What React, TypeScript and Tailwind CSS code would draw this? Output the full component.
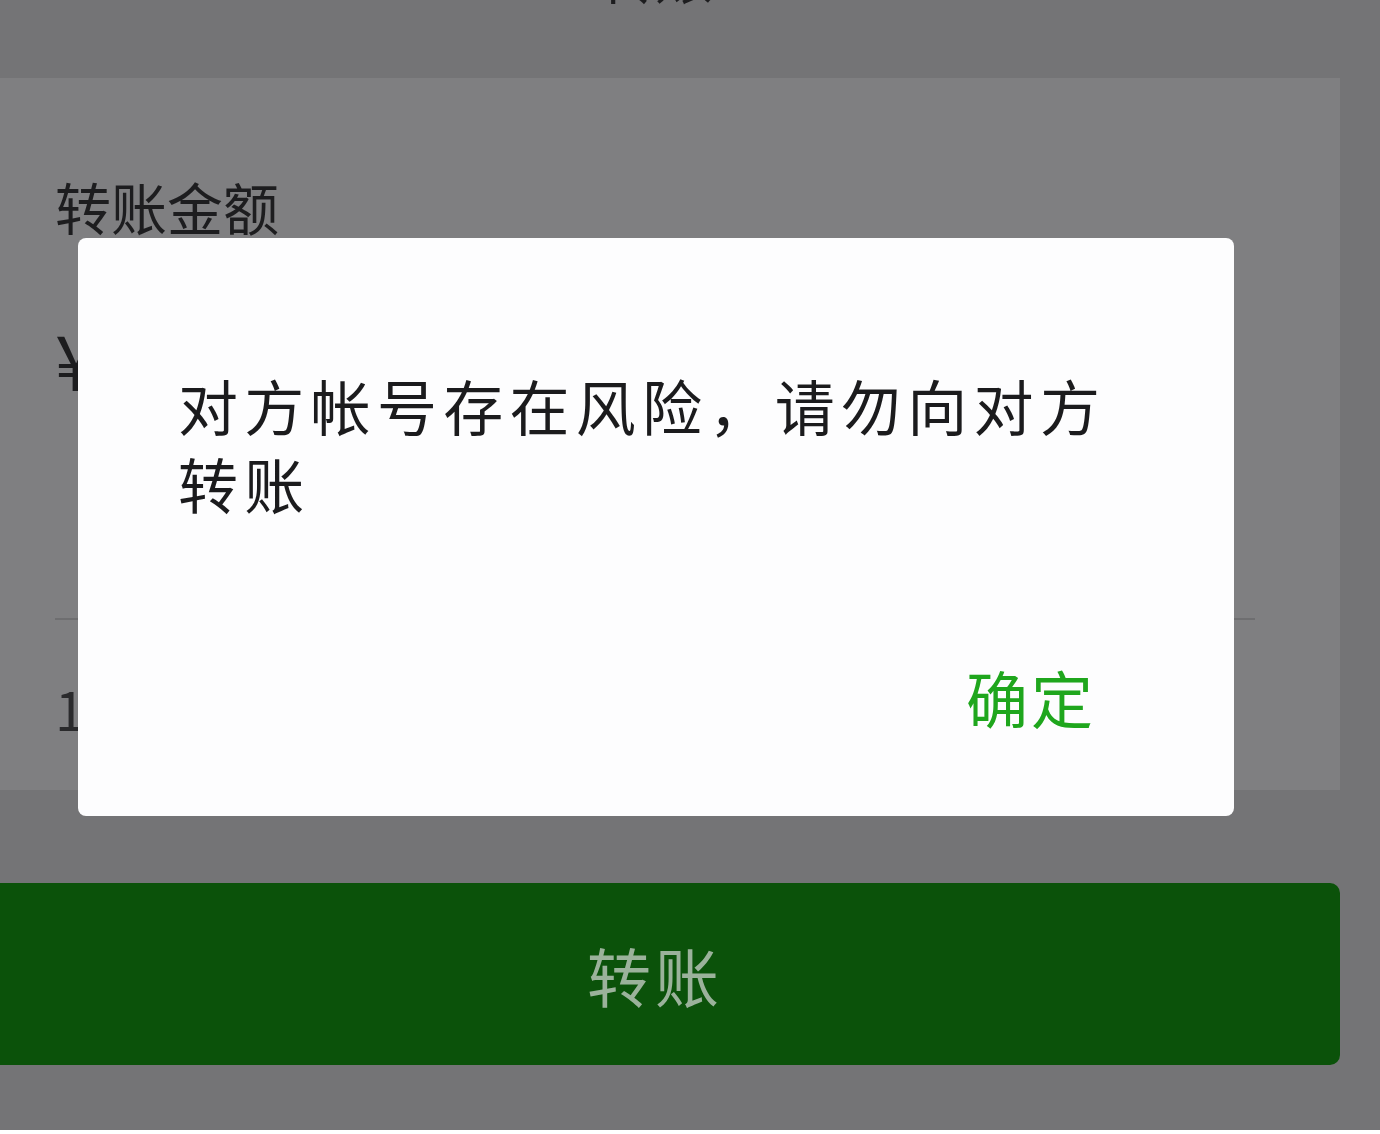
export default function App() {
  return (
    <div
      className="relative flex h-[1134px] w-[1380px] flex-col overflow-hidden bg-[#747476]"
      style={{ fontFamily: '"Noto Sans CJK SC", "Noto Sans", sans-serif' }}
    >
      {/* page title, scrolled mostly out of view */}
      <div className="flex h-[78px] justify-center overflow-hidden pr-[70px]">
        <div className="-mt-[56px] text-[58px] leading-[60px] text-[#1d1d1f]">转账</div>
      </div>

      {/* amount card under the overlay */}
      <section className="mr-[40px] flex h-[712px] flex-col bg-[#7f7f81] pl-[55px] pr-[85px]">
        <div className="mt-[98px] text-[56px] leading-[60px] text-[#1d1d1f]">转账金额</div>
        <div className="mt-[82px] text-[76px] leading-[80px] text-[#1d1d1f]">¥</div>
        <div className="mt-[220px] h-[2px] bg-[#6e6e70]" />
        <div className="mt-[60px] text-[54px] leading-[56px] text-[#2a2a2c]">1</div>
      </section>

      <div className="mr-[40px] mt-[93px] flex h-[182px] items-center justify-center rounded-r-[10px] bg-[#0b520a] pr-[30px]">
        <span className="text-[64px] leading-none tracking-[4px] text-[#9bb29b]">转账</span>
      </div>

      <div className="mt-auto h-[4px] bg-white" />

      {/* risk warning dialog */}
      <div className="absolute left-[78px] top-[238px] flex h-[578px] w-[1156px] flex-col rounded-[8px] bg-[#fdfdfe] pl-[100px] pr-[80px]">
        <p className="mt-[128px] text-[60px] leading-[78px] tracking-[6.3px] text-[#1b1b1d]">
          对方帐号存在风险，请勿向对方转账
        </p>
        <div className="mt-auto mb-[84px] flex justify-end pr-[58px]">
          <button className="text-[62px] leading-[70px] tracking-[3px] text-[#1fa61d]">确定</button>
        </div>
      </div>
    </div>
  );
}
